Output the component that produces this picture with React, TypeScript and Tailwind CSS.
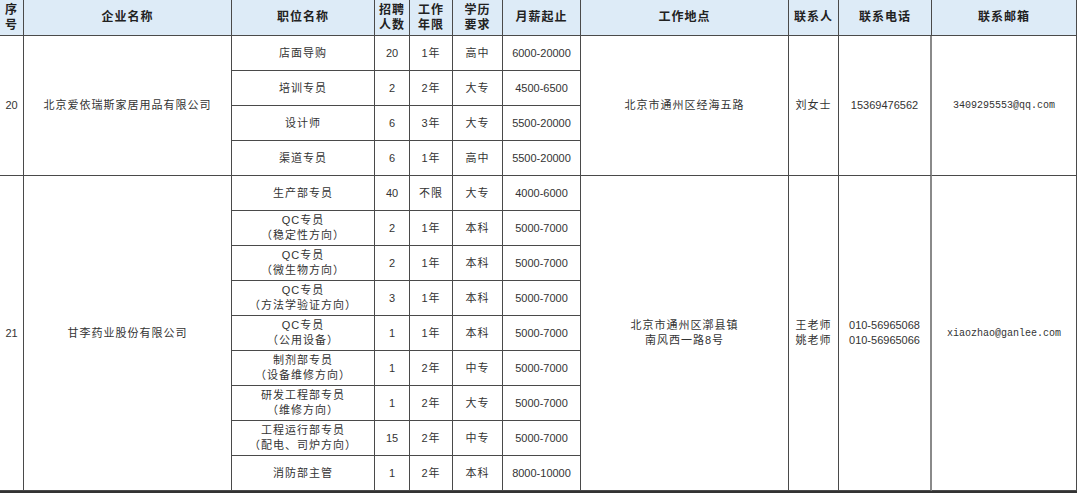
import React from "react";

type Job = { title: string; sub?: string; num: string; years: string; edu: string; pay: string };

type Company = {
  seq: string;
  name: string;
  jobs: Job[];
  address: string[];
  contacts: string[];
  phones: string[];
  email: string;
};

const companies: Company[] = [
  {
    seq: "20",
    name: "北京爱依瑞斯家居用品有限公司",
    jobs: [
      { title: "店面导购", num: "20", years: "1年", edu: "高中", pay: "6000-20000" },
      { title: "培训专员", num: "2", years: "2年", edu: "大专", pay: "4500-6500" },
      { title: "设计师", num: "6", years: "3年", edu: "大专", pay: "5500-20000" },
      { title: "渠道专员", num: "6", years: "1年", edu: "高中", pay: "5500-20000" },
    ],
    address: ["北京市通州区经海五路"],
    contacts: ["刘女士"],
    phones: ["15369476562"],
    email: "3409295553@qq.com",
  },
  {
    seq: "21",
    name: "甘李药业股份有限公司",
    jobs: [
      { title: "生产部专员", num: "40", years: "不限", edu: "大专", pay: "4000-6000" },
      { title: "QC专员", sub: "（稳定性方向）", num: "2", years: "1年", edu: "本科", pay: "5000-7000" },
      { title: "QC专员", sub: "（微生物方向）", num: "2", years: "1年", edu: "本科", pay: "5000-7000" },
      { title: "QC专员", sub: "（方法学验证方向）", num: "3", years: "1年", edu: "本科", pay: "5000-7000" },
      { title: "QC专员", sub: "（公用设备）", num: "1", years: "1年", edu: "本科", pay: "5000-7000" },
      { title: "制剂部专员", sub: "（设备维修方向）", num: "1", years: "2年", edu: "中专", pay: "5000-7000" },
      { title: "研发工程部专员", sub: "（维修方向）", num: "1", years: "2年", edu: "大专", pay: "5000-7000" },
      { title: "工程运行部专员", sub: "（配电、司炉方向）", num: "15", years: "2年", edu: "中专", pay: "5000-7000" },
      { title: "消防部主管", num: "1", years: "2年", edu: "本科", pay: "8000-10000" },
    ],
    address: ["北京市通州区漷县镇", "南风西一路8号"],
    contacts: ["王老师", "姚老师"],
    phones: ["010-56965068", "010-56965066"],
    email: "xiaozhao@ganlee.com",
  },
];

const cell = "flex flex-col items-center justify-center text-center border-r border-b border-[#4a4a4a]";
const cjk = "text-[11px] tracking-[1px] leading-[15px]";
const num = "text-[11px] leading-[15px]";

function Head({ lines }: { lines: string[] }) {
  return (
    <div className={`${cell} bg-[#ddebf7] text-[12px] font-bold tracking-[1px] leading-[15px] text-[#222]`}>
      {lines.map((l) => (
        <span key={l}>{l}</span>
      ))}
    </div>
  );
}

function Block({ c }: { c: Company }) {
  const span = c.jobs.length === 4 ? "row-span-4" : "row-span-9";
  return (
    <>
      {c.jobs.map((j, i) => (
        <React.Fragment key={i}>
          {i === 0 && (
            <>
              <div className={`${cell} ${span} ${num}`}>{c.seq}</div>
              <div className={`${cell} ${span} ${cjk}`}>{c.name}</div>
            </>
          )}
          <div className={`${cell} ${cjk}`}>
            <span>{j.title}</span>
            {j.sub && <span>{j.sub}</span>}
          </div>
          <div className={`${cell} ${num}`}>{j.num}</div>
          <div className={`${cell} ${cjk}`}>{j.years}</div>
          <div className={`${cell} ${cjk}`}>{j.edu}</div>
          <div className={`${cell} ${num}`}>{j.pay}</div>
          {i === 0 && (
            <>
              <div className={`${cell} ${span} ${cjk}`}>
                {c.address.map((a) => (
                  <span key={a}>{a}</span>
                ))}
              </div>
              <div className={`${cell} ${span} ${cjk}`}>
                {c.contacts.map((a) => (
                  <span key={a}>{a}</span>
                ))}
              </div>
              <div className={`${cell} ${span} ${num} border-r-2 border-r-[#8a8a8a]`}>
                {c.phones.map((a) => (
                  <span key={a}>{a}</span>
                ))}
              </div>
              <div className={`${cell} ${span} text-[10px] leading-[15px] font-['Liberation_Mono',monospace]`}>
                {c.email}
              </div>
            </>
          )}
        </React.Fragment>
      ))}
    </>
  );
}

export default function App() {
  return (
    <div className="w-[1080px] h-[493px] bg-white overflow-hidden font-['Liberation_Sans','Noto_Sans_CJK_SC',sans-serif] text-[#333]">
      <div className="grid grid-cols-[24px_208px_143px_35px_43px_50px_78px_208px_50px_93px_145px] grid-rows-[36px_repeat(13,35px)] w-[1077px] border-b-2 border-[#333]">
        <Head lines={["序", "号"]} />
        <Head lines={["企业名称"]} />
        <Head lines={["职位名称"]} />
        <Head lines={["招聘", "人数"]} />
        <Head lines={["工作", "年限"]} />
        <Head lines={["学历", "要求"]} />
        <Head lines={["月薪起止"]} />
        <Head lines={["工作地点"]} />
        <Head lines={["联系人"]} />
        <Head lines={["联系电话"]} />
        <Head lines={["联系邮箱"]} />
        {companies.map((c) => (
          <Block key={c.seq} c={c} />
        ))}
      </div>
    </div>
  );
}
